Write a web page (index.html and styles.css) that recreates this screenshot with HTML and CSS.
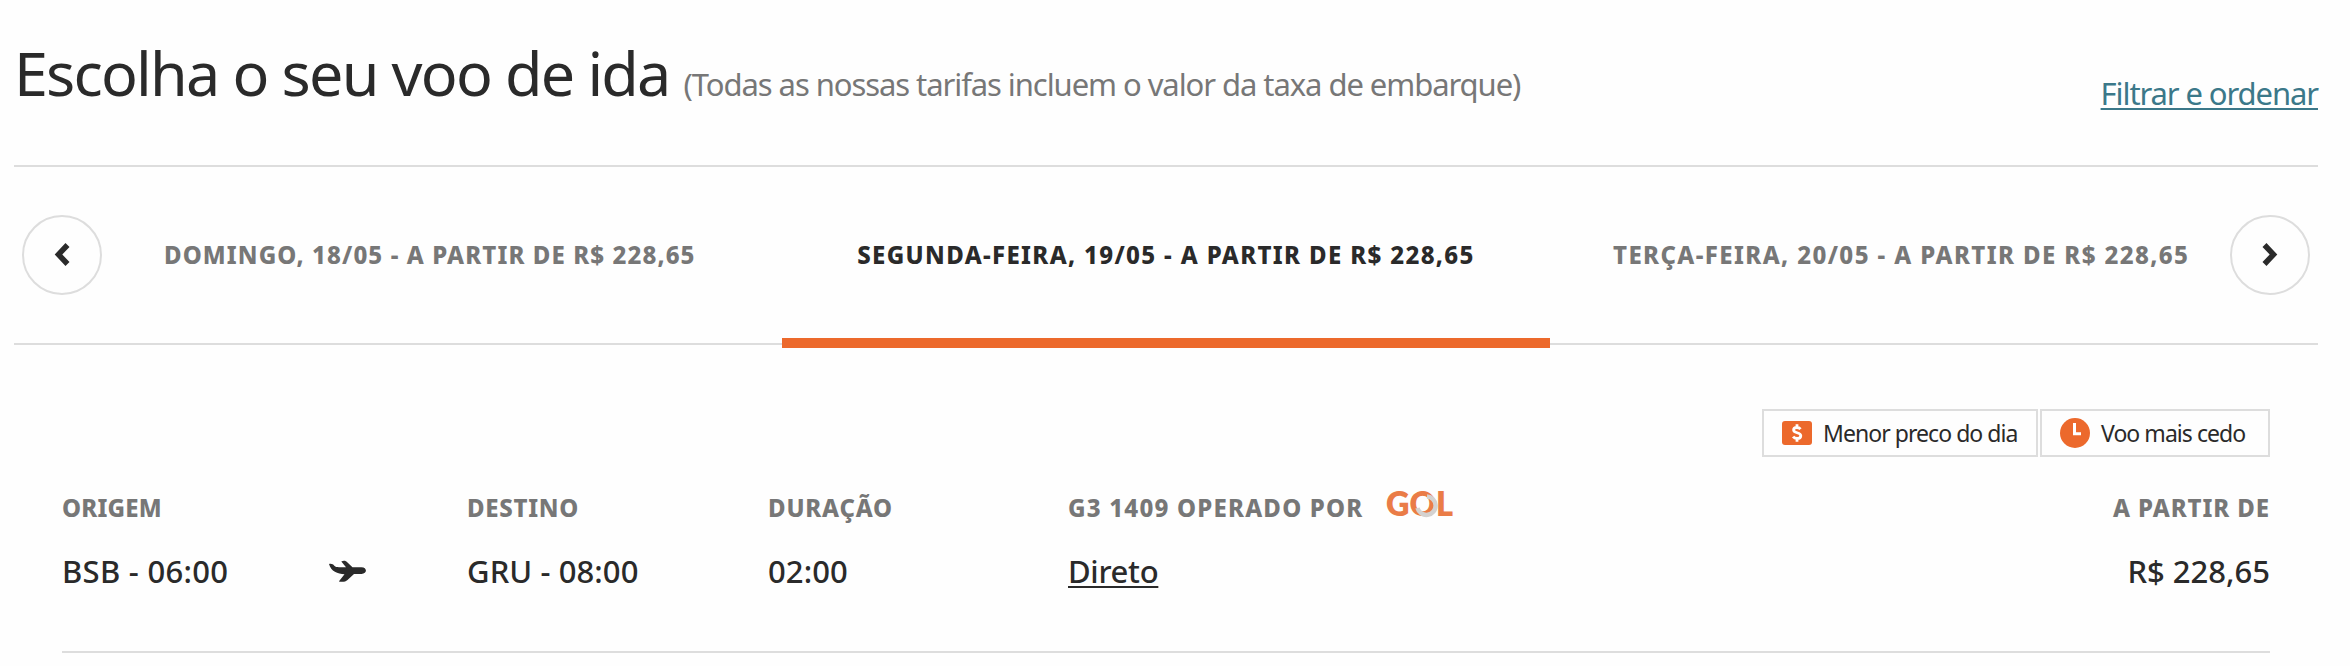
FILE: index.html
```html
<!DOCTYPE html>
<html lang="pt-BR">
<head>
  <meta charset="UTF-8" />
  <title>Escolha o seu voo de ida</title>
  <link rel="stylesheet" href="styles.css">
</head>
<body>

  <header class="header">
    <h1>Escolha o seu voo de ida <small>(Todas as nossas tarifas incluem o valor da taxa de embarque)</small></h1>
    <a class="filter-link" href="#">Filtrar e ordenar</a>
  </header>

  <nav class="days">
    <div class="day day-prev">
      <button class="arrow" aria-label="Dia anterior">
        <svg width="16" height="24" viewBox="0 0 16 24"><path d="M13.500 2 4.500 11.500l9 9.500" /></svg>
      </button>
      <span>DOMINGO, 18/05 - A PARTIR DE R$ 228,65</span>
    </div>
    <div class="day active">
      <span>SEGUNDA-FEIRA, 19/05 - A PARTIR DE R$ 228,65</span>
    </div>
    <div class="day day-next">
      <span>TERÇA-FEIRA, 20/05 - A PARTIR DE R$ 228,65</span>
      <button class="arrow" aria-label="Próximo dia">
        <svg width="16" height="24" viewBox="0 0 16 24"><path d="M2.500 2 11.500 11.500l-9 9.500" /></svg>
      </button>
    </div>
  </nav>

  <section class="flight">
    <div class="badges">
      <div class="badge">
        <svg width="30" height="30" viewBox="0 0 30 30">
          <rect y="3" width="30" height="24" rx="3" fill="#ec692c" />
          <path d="M18.500 11.200c-1-1.300-2.200-1.700-3.600-1.700-1.900 0-3.300.900-3.300 2.500 0 3.600 7.200 1.900 7.200 5.700 0 1.800-1.500 2.800-3.700 2.800-1.700 0-3-.500-4-1.900M15 6.300v3.200M15 20.500v3.200" fill="none" stroke="#fff" stroke-width="2.800" />
        </svg>
        <span>Menor preco do dia</span>
      </div>
      <div class="badge badge-early">
        <svg width="30" height="30" viewBox="0 0 30 30">
          <circle cx="15" cy="15" r="15" fill="#ec692c" />
          <path d="M14.500 5v10.700h6.500" fill="none" stroke="#fff" stroke-width="3" />
        </svg>
        <span>Voo mais cedo</span>
      </div>
    </div>

    <div class="info">
      <div class="col">
        <div class="label label-origin">ORIGEM</div>
        <div class="value route">
          <span>BSB - 06:00</span>
          <svg class="plane" width="37" height="22" viewBox="0 0 37 22">
            <path d="M0 4C2.500 3.500 4 4.200 5.300 5.800 6.500 7 8 7.200 10 7.200H17L12.300 1.400C14.800.300 17 .700 18.500 2.500L23.500 7.200H32.500C38.400 7.200 38.400 14 32.500 14H25L18.500 20C16.600 21.800 14 22.100 9.800 21.600L15.500 14.300C8.500 13.700 2 11.500 0 4Z" fill="#2a2a2a" />
          </svg>
        </div>
      </div>
      <div class="col">
        <div class="label label-destination">DESTINO</div>
        <div class="value">GRU - 08:00</div>
      </div>
      <div class="col">
        <div class="label label-duration">DURAÇÃO</div>
        <div class="value">02:00</div>
      </div>
      <div class="col">
        <div class="label label-carrier">
          <span>G3 1409 OPERADO POR</span>
          <svg class="gol" width="68" height="34" viewBox="0 0 68 34">
            <text x="0" y="25" textLength="67" lengthAdjust="spacingAndGlyphs">GOL</text>
            <path d="M41 5.500A9.200 9.200 0 1 1 31.500 17" />
          </svg>
        </div>
        <div class="value direct"><a href="#">Direto</a></div>
      </div>
      <div class="col price">
        <div class="label">A PARTIR DE</div>
        <div class="value">R$ 228,65</div>
      </div>
    </div>
  </section>

</body>
</html>
```
FILE: styles.css
```css
* {
  box-sizing: border-box;
}
body {
  margin: 0;
  padding: 0 32px 0 14px;
  font-family: "Noto Sans", "Open Sans", sans-serif;
  background: #fefefe;
  color: #2a2a2a;
}

.header {
  display: flex;
  justify-content: space-between;
  align-items: flex-start;
  height: 165px;
  padding-top: 33px;
}
h1 {
  margin: 0;
  font-size: 61px;
  font-weight: 400;
  line-height: 80px;
  letter-spacing: -1.8px;
  white-space: nowrap;
}
h1 small {
  font-size: 31px;
  letter-spacing: -1.07px;
  color: #777;
}
.filter-link {
  margin-top: 40px;
  font-size: 31px;
  line-height: 40px;
  letter-spacing: -1.1px;
  color: #3b7889;
  text-underline-offset: 3px;
  text-decoration-thickness: 2px;
}

.days {
  display: flex;
  height: 180px;
  border-top: 2px solid #ddd;
  border-bottom: 2px solid #ddd;
}
.day {
  position: relative;
  flex: none;
  width: 33.3333%;
  display: flex;
  align-items: center;
  justify-content: center;
  font-size: 24px;
  font-weight: 800;
  letter-spacing: 1.35px;
  white-space: nowrap;
  color: #777;
}
.day span {
  padding-bottom: 2px;
}
.day-prev {
  justify-content: flex-start;
  gap: 62px;
  padding-left: 8px;
  letter-spacing: 1.1px;
}
.day-next {
  justify-content: space-between;
  padding: 0 8px 0 63px;
  letter-spacing: 1.4px;
}
.day.active {
  color: #2a2a2a;
}
.day.active::after {
  content: "";
  position: absolute;
  left: 0;
  right: 0;
  bottom: -5px;
  height: 10px;
  background: #ec692c;
}
.arrow {
  display: flex;
  align-items: center;
  justify-content: center;
  width: 80px;
  height: 80px;
  padding: 0;
  border: 2px solid #ddd;
  border-radius: 50%;
  background: none;
}
.arrow path {
  fill: none;
  stroke: #2a2a2a;
  stroke-width: 5.5;
}

.flight {
  margin: 64px 48px 0;
  padding-bottom: 60px;
  border-bottom: 2px solid #ddd;
}
.badges {
  display: flex;
  justify-content: flex-end;
  gap: 2px;
}
.badge {
  display: flex;
  align-items: center;
  gap: 11px;
  width: 276px;
  height: 48px;
  padding-left: 18px;
  border: 2px solid #ddd;
  font-size: 23px;
  letter-spacing: -0.95px;
  white-space: nowrap;
}
.badge-early {
  width: 230px;
}

.info {
  display: grid;
  grid-template-columns: 405px 301px 300px 1fr auto;
  margin-top: 34px;
}
.label {
  height: 34px;
  font-size: 24px;
  font-weight: 800;
  line-height: 34px;
  color: #777;
}
.label-origin {
  letter-spacing: 0.2px;
}
.label-destination {
  letter-spacing: 0.7px;
}
.label-duration {
  letter-spacing: 0.8px;
}
.label-carrier {
  display: flex;
  gap: 23px;
  letter-spacing: 1.2px;
}
.value {
  margin-top: 26px;
  font-size: 31px;
  font-weight: 500;
  line-height: 40px;
  letter-spacing: 0.1px;
}
.value a {
  color: inherit;
  text-underline-offset: 3px;
  text-decoration-thickness: 2px;
}
.direct {
  letter-spacing: -0.3px;
}
.route {
  display: flex;
  align-items: center;
  letter-spacing: 0.3px;
}
.plane {
  margin-left: 101px;
}
.gol {
  overflow: visible;
}
.gol text {
  font-family: Lato, sans-serif;
  font-size: 34px;
  font-weight: 800;
  letter-spacing: 0;
  fill: #ea7c47;
}
.gol path {
  fill: none;
  stroke: #d4d2d0;
  stroke-width: 4.5;
}
.price {
  text-align: right;
}
.price .label {
  letter-spacing: 0.9px;
}
.price .value {
  letter-spacing: 0;
}
```
